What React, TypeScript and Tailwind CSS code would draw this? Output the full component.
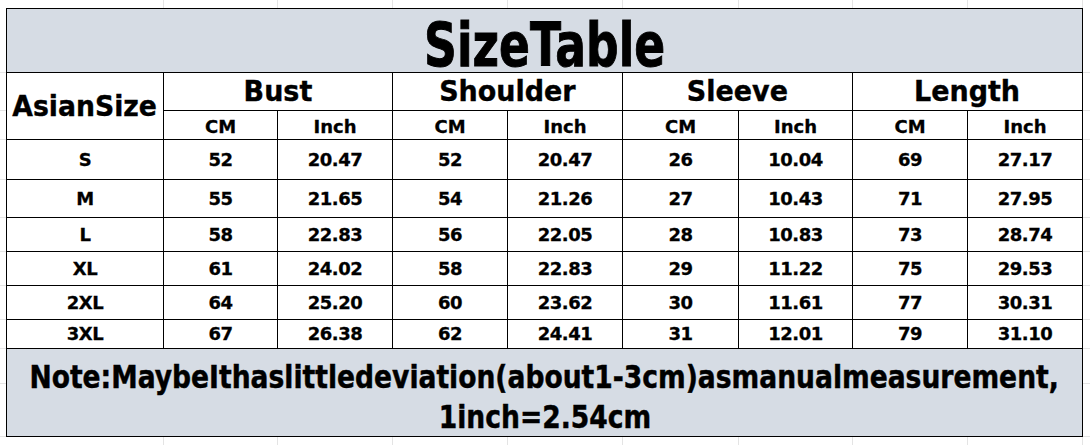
import React from "react";

const SIZES = [
  ["S", "52", "20.47", "52", "20.47", "26", "10.04", "69", "27.17"],
  ["M", "55", "21.65", "54", "21.26", "27", "10.43", "71", "27.95"],
  ["L", "58", "22.83", "56", "22.05", "28", "10.83", "73", "28.74"],
  ["XL", "61", "24.02", "58", "22.83", "29", "11.22", "75", "29.53"],
  ["2XL", "64", "25.20", "60", "23.62", "30", "11.61", "77", "30.31"],
  ["3XL", "67", "26.38", "62", "24.41", "31", "12.01", "79", "31.10"],
];

const HEADS = ["Bust", "Shoulder", "Sleeve", "Length"];

// faint sheet gridlines around the table
const TOP_SEGS = [164, 114, 115, 115, 115, 116, 114, 115, 115];
const SIDE_SEGS = [65, 38, 29, 40, 38, 34, 34, 34, 29, 35, 53];

function GridStrip() {
  return (
    <div className="flex h-[8px]">
      {TOP_SEGS.map((w, i) => (
        <div key={i} className="h-full border-r border-[#e4e4e4]" style={{ width: w }} />
      ))}
      <div className="flex-1" />
    </div>
  );
}

function SideStrip({ width }: { width: string }) {
  return (
    <div className={`flex flex-col ${width}`}>
      {SIDE_SEGS.map((h, i) => (
        <div key={i} className="w-full border-b border-[#e4e4e4]" style={{ height: h }} />
      ))}
    </div>
  );
}

export default function App() {
  return (
    <div className="w-[1090px] h-[445px] bg-white flex flex-col font-['DejaVu_Sans',sans-serif] font-bold text-black">
      <GridStrip />

      <div className="flex">
        <SideStrip width="w-[6px]" />

        {/* Table */}
        <div className="grid grid-cols-[156px_113px_114px_114px_114px_115px_113px_114px_114px] grid-rows-[63px_37px_28px_39px_37px_33px_33px_33px_28px_87px] gap-px p-px bg-black">
          {/* Title */}
          <div className="col-span-9 bg-[#d6dce4] flex items-center justify-center pt-2 leading-[50px] whitespace-nowrap">
            <span className="inline-block text-[60px] scale-x-[0.76] [-webkit-text-stroke:1px_#000]">SizeTable</span>
          </div>

          {/* Header row */}
          <div className="row-span-2 bg-white flex items-center justify-center leading-none whitespace-nowrap">
            <span className="inline-block text-[29px] scale-x-[0.92] [-webkit-text-stroke:0.4px_#000]">AsianSize</span>
          </div>
          {HEADS.map((h) => (
            <div key={h} className="col-span-2 bg-white flex items-center justify-center leading-none whitespace-nowrap">
              <span className="inline-block text-[29px] scale-x-[0.93] [-webkit-text-stroke:0.4px_#000]">{h}</span>
            </div>
          ))}
          {HEADS.flatMap((h) => [
            <div key={h + "cm"} className="bg-white flex items-center justify-center pt-1 text-[18px] leading-none [-webkit-text-stroke:0.3px_#000]">
              CM
            </div>,
            <div key={h + "in"} className="bg-white flex items-center justify-center pt-1 text-[18px] leading-none [-webkit-text-stroke:0.3px_#000]">
              Inch
            </div>,
          ])}

          {/* Data */}
          {SIZES.flatMap((row) =>
            row.map((v, i) => (
              <div
                key={row[0] + i}
                className="bg-white flex items-center justify-center text-[18px] leading-none tracking-[-0.5px] [-webkit-text-stroke:0.3px_#000]"
              >
                {v}
              </div>
            ))
          )}

          {/* Note */}
          <div className="col-span-9 bg-[#d6dce4] flex flex-col items-center pt-[8px] text-[32px] leading-[40px] whitespace-nowrap [-webkit-text-stroke:0.5px_#000]">
            <div className="w-full flex justify-center">
              <span className="inline-block scale-x-[0.83]">
                Note:MaybeIthaslittledeviation(about1-3cm)asmanualmeasurement,
              </span>
            </div>
            <div className="w-full flex justify-center">
              <span className="inline-block scale-x-[0.83]">1inch=2.54cm</span>
            </div>
          </div>
        </div>

        <SideStrip width="flex-1" />
      </div>

      <GridStrip />
    </div>
  );
}
